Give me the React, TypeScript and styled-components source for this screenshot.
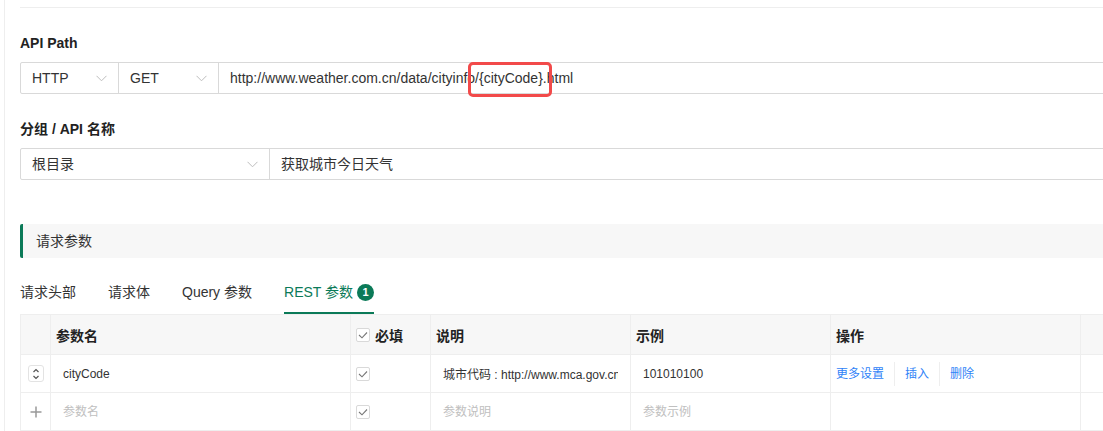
import React from 'react';
import styled, { createGlobalStyle } from 'styled-components';

const GREEN = '#0b7a58';

const GlobalStyle = createGlobalStyle`
  html, body {
    margin: 0;
    padding: 0;
    background: #fff;
    overflow: hidden;
  }
  body {
    font-family: "Liberation Sans", Arial, "Noto Sans CJK SC", sans-serif;
    color: #333;
  }
  * { box-sizing: border-box; }
`;

const Page = styled.div`
  display: flex;
  height: 431px;
`;

const Gutter = styled.div`
  width: 4px;
  flex: none;
`;

const Panel = styled.div`
  flex: 1;
  border-left: 1px solid #eee;
  padding-left: 15px;
  overflow: hidden;
`;

const Content = styled.div`
  width: 1110px;
`;

const TopRule = styled.div`
  height: 8px;
  border-bottom: 1px solid #eee;
`;

const Label = styled.div`
  margin: 24px 0 8px;
  font-size: 14px;
  font-weight: 700;
  line-height: 22px;
  color: #222;
`;

const FieldRow = styled.div`
  display: flex;
  height: 32px;
`;

const Field = styled.div<{ $width?: number; $first?: boolean; $select?: boolean }>`
  display: flex;
  align-items: center;
  justify-content: ${(p) => (p.$select ? 'space-between' : 'flex-start')};
  flex: ${(p) => (p.$width ? `0 0 ${p.$width}px` : '1')};
  height: 32px;
  padding: 0 11px;
  margin-left: ${(p) => (p.$first ? '0' : '-1px')};
  border: 1px solid #d9d9d9;
  border-radius: ${(p) => (p.$first ? '2px 0 0 2px' : '0')};
  font-size: 14px;
  line-height: 30px;
  color: #333;
  white-space: nowrap;
`;

const Highlight = styled.span`
  position: relative;
  display: inline-block;
  line-height: 30px;

  &::after {
    content: '';
    position: absolute;
    left: -11px;
    right: -9px;
    top: -1px;
    bottom: -4px;
    border: 3px solid #f24a4a;
    border-radius: 5px;
  }
`;

const SectionHeader = styled.div`
  margin-top: 44px;
  height: 34px;
  line-height: 34px;
  padding-left: 13px;
  background: #f7f7f7;
  border-left: 3px solid ${GREEN};
  border-radius: 2px 0 0 2px;
  font-size: 14px;
  color: #333;
`;

const Tabs = styled.div`
  display: flex;
  gap: 32px;
  margin-top: 13px;
`;

const Tab = styled.div<{ $active?: boolean }>`
  display: flex;
  align-items: center;
  padding: 10px 0 9px;
  line-height: 22px;
  font-size: 14px;
  color: ${(p) => (p.$active ? GREEN : '#333')};
  border-bottom: 2px solid ${(p) => (p.$active ? GREEN : 'transparent')};
`;

const Badge = styled.span`
  display: inline-flex;
  align-items: center;
  justify-content: center;
  width: 17px;
  height: 17px;
  margin-left: 4px;
  border-radius: 50%;
  background: ${GREEN};
  color: #fff;
  font-size: 11px;
  font-weight: 700;
`;

const Table = styled.div`
  display: grid;
  grid-template-columns: 30px 300px 80px 200px 200px 250px 1fr;
  grid-template-rows: 40px 38px 38px;
  border-left: 1px solid #eee;
  border-top: 1px solid #eee;
`;

const Cell = styled.div<{ $head?: boolean; $center?: boolean }>`
  display: flex;
  align-items: center;
  justify-content: ${(p) => (p.$center ? 'center' : 'flex-start')};
  padding: 0 5px;
  border-right: 1px solid #eee;
  border-bottom: 1px solid #eee;
  background: ${(p) => (p.$head ? '#f7f7f7' : '#fff')};
  font-size: ${(p) => (p.$head ? '14px' : '12px')};
  font-weight: ${(p) => (p.$head ? 700 : 400)};
  color: ${(p) => (p.$head ? '#222' : '#333')};
  white-space: nowrap;
  overflow: hidden;
`;

const CellInput = styled.input`
  width: 100%;
  height: 26px;
  padding: 0 7px;
  border: none;
  outline: none;
  background: transparent;
  font: inherit;
  font-size: 12px;
  color: #333;

  &::placeholder {
    color: #c0c0c0;
  }
`;

const Box = styled.span`
  display: inline-flex;
  align-items: center;
  justify-content: center;
  width: 14px;
  height: 14px;
  border: 1px solid #d9d9d9;
  border-radius: 2px;
  background: #fff;
  flex: none;
`;

const HeadLabel = styled.span`
  margin-left: 5px;
`;

const Handle = styled.span`
  display: inline-flex;
  align-items: center;
  justify-content: center;
  width: 16px;
  height: 17px;
  border: 1px solid #e3e3e3;
  border-radius: 3px;
  background: #fff;
`;

const Link = styled.a`
  display: inline-block;
  padding: 0 10px;
  line-height: 24px;
  font-size: 12px;
  color: #2f83f7;
  cursor: pointer;

  &:first-child {
    padding-left: 0;
  }
  & + & {
    border-left: 1px solid #eee;
  }
`;

const Chevron = () => (
  <svg width="11" height="7" viewBox="0 0 11 7">
    <polyline points="0.5,0.8 5.5,5.8 10.5,0.8" fill="none" stroke="#bdbdbd" strokeWidth="1" />
  </svg>
);

const Check = () => (
  <svg width="10" height="8" viewBox="0 0 10 8">
    <polyline points="1,4 4,6.8 9,1.5" fill="none" stroke="#777" strokeWidth="1.1" />
  </svg>
);

const CheckBox = () => (
  <Box>
    <Check />
  </Box>
);

const SortHandle = () => (
  <Handle>
    <svg width="8" height="12" viewBox="0 0 8 12">
      <polyline points="1.5,4 4,1.5 6.5,4" fill="none" stroke="#555" strokeWidth="1.2" />
      <polyline points="1.5,8 4,10.5 6.5,8" fill="none" stroke="#555" strokeWidth="1.2" />
    </svg>
  </Handle>
);

const Plus = () => (
  <svg width="12" height="12" viewBox="0 0 12 12">
    <line x1="6" y1="0.5" x2="6" y2="11.5" stroke="#999" strokeWidth="1.5" />
    <line x1="0.5" y1="6" x2="11.5" y2="6" stroke="#999" strokeWidth="1.5" />
  </svg>
);

const App: React.FC = () => (
  <>
    <GlobalStyle />
    <Page>
      <Gutter />
      <Panel>
        <Content>
          <TopRule />

          <Label>API Path</Label>
          <FieldRow>
            <Field $width={99} $first $select>
              HTTP <Chevron />
            </Field>
            <Field $width={101} $select>
              GET <Chevron />
            </Field>
            <Field>
              http://www.weather.com.cn/data/cityinfo/<Highlight>{'{cityCode}'}</Highlight>.html
            </Field>
          </FieldRow>

          <Label>分组 / API 名称</Label>
          <FieldRow>
            <Field $width={250} $first $select>
              根目录 <Chevron />
            </Field>
            <Field>获取城市今日天气</Field>
          </FieldRow>

          <SectionHeader>请求参数</SectionHeader>

          <Tabs>
            <Tab>请求头部</Tab>
            <Tab>请求体</Tab>
            <Tab>Query 参数</Tab>
            <Tab $active>
              REST 参数<Badge>1</Badge>
            </Tab>
          </Tabs>

          <Table>
            <Cell $head />
            <Cell $head>参数名</Cell>
            <Cell $head>
              <CheckBox />
              <HeadLabel>必填</HeadLabel>
            </Cell>
            <Cell $head>说明</Cell>
            <Cell $head>示例</Cell>
            <Cell $head>操作</Cell>
            <Cell $head />

            <Cell $center>
              <SortHandle />
            </Cell>
            <Cell>
              <CellInput readOnly value="cityCode" />
            </Cell>
            <Cell>
              <CheckBox />
            </Cell>
            <Cell>
              <CellInput readOnly value="城市代码 : http://www.mca.gov.cn/article/sj/xzqh/" />
            </Cell>
            <Cell>
              <CellInput readOnly value="101010100" />
            </Cell>
            <Cell>
              <Link>更多设置</Link>
              <Link>插入</Link>
              <Link>删除</Link>
            </Cell>
            <Cell />

            <Cell $center>
              <Plus />
            </Cell>
            <Cell>
              <CellInput readOnly placeholder="参数名" />
            </Cell>
            <Cell>
              <CheckBox />
            </Cell>
            <Cell>
              <CellInput readOnly placeholder="参数说明" />
            </Cell>
            <Cell>
              <CellInput readOnly placeholder="参数示例" />
            </Cell>
            <Cell />
            <Cell />
          </Table>
        </Content>
      </Panel>
    </Page>
  </>
);

export default App;
